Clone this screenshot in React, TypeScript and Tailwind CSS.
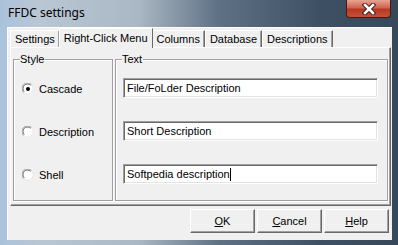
import React from 'react';

const ui = { fontFamily: '"Liberation Sans", Arial, sans-serif' };

const tabs = ['Settings', 'Right-Click Menu', 'Columns', 'Database', 'Descriptions'];

function Radio({ checked }: { checked?: boolean }) {
  return (
    <svg width="12" height="12" viewBox="0 0 12 12">
      <circle cx="6" cy="6" r="5.5" fill="#fff" />
      <path d="M1.5 9.5 A5.5 5.5 0 0 1 9.5 1.5" fill="none" stroke="#a0a0a0" strokeWidth="1" />
      <path d="M2.3 8.7 A4.5 4.5 0 0 1 8.7 2.3" fill="none" stroke="#696969" strokeWidth="1" />
      <path d="M2.3 10 A5.5 5.5 0 0 0 10 2.3" fill="none" stroke="#e3e3e3" strokeWidth="1" />
      {checked && <circle cx="6" cy="6" r="2" fill="#000" />}
    </svg>
  );
}

function TextBox({ value, caret }: { value: string; caret?: boolean }) {
  return (
    <div className="h-[20px] bg-white border border-t-[#a0a0a0] border-l-[#a0a0a0] border-b-white border-r-white shadow-[inset_1px_1px_0_#696969,inset_-1px_-1px_0_#e3e3e3] flex items-center pl-[3px] text-[11px] text-black">
      <span>{value}</span>
      {caret && <span className="w-px h-[13px] bg-black" />}
    </div>
  );
}

function Button({ hot, rest }: { hot: string; rest: string }) {
  return (
    <div className="w-[65px] h-[24px] bg-[#f0f0f0] border border-t-white border-l-white border-b-[#696969] border-r-[#696969] shadow-[inset_-1px_-1px_0_#a0a0a0] flex items-center justify-center text-[11px] text-black">
      <span>
        <span className="underline">{hot}</span>
        {rest}
      </span>
    </div>
  );
}

function Group({ label, className, children }: { label: string; className: string; children: React.ReactNode }) {
  return (
    <div className={`relative border border-[#a0a0a0] shadow-[inset_1px_1px_0_#fff,1px_1px_0_#fff] ${className}`}>
      <span className="absolute -top-[7px] left-[6px] bg-[#f0f0f0] pr-px text-[11px] leading-[13px] text-black">{label}</span>
      {children}
    </div>
  );
}

export default function App() {
  return (
    <div
      className="w-[398px] h-[245px] overflow-hidden flex flex-col bg-[linear-gradient(90deg,#a9c3dc_0%,#b9c6d3_10%,#aab7c4_35%,#5f7184_55%,#3e5063_80%,#36485a_100%)]"
      style={ui}
    >
      {/* Title bar */}
      <div className="h-[27px] flex items-start justify-between pl-[8px] pr-[7px] shrink-0">
        <span className="mt-[4px] text-[12px] text-black" style={{ fontFamily: '"Noto Sans", "Open Sans", sans-serif' }}>
          FFDC settings
        </span>
        <div className="w-[45px] h-[18px] rounded-b-[4px] border border-t-0 border-[#4a1a12] bg-[linear-gradient(180deg,#e8a394_0%,#d1644f_45%,#b53a22_55%,#c8503a_100%)] flex items-center justify-center">
          <svg width="14" height="12" viewBox="0 0 14 12">
            <path d="M3 2 L11 10 M11 2 L3 10" stroke="#3a2020" strokeWidth="4.5" strokeLinecap="square" />
            <path d="M3 2 L11 10 M11 2 L3 10" stroke="#fff" strokeWidth="2.5" strokeLinecap="square" />
          </svg>
        </div>
      </div>

      {/* Client area */}
      <div className="ml-[7px] mr-[6px] mb-[5px] flex-1 bg-[#f0f0f0] border-l border-t border-white flex flex-col pl-[2px] pr-[1px]">
        {/* Tabs */}
        <div className="h-[19px] flex items-end text-[11px] text-black">
          {tabs.map((t, i) =>
            i === 1 ? (
              <div key={t} className="h-[20px] -mx-[1px] px-[4px] bg-[#f0f0f0] border-l border-t border-white border-r border-r-[#696969] relative z-10 -mb-px flex items-center">
                {t}
              </div>
            ) : (
              <div key={t} className="h-[17px] px-[4px] border-l border-t border-white border-r border-r-[#696969] shadow-[inset_-1px_0_0_#a0a0a0] flex items-center">
                {t}
              </div>
            )
          )}
        </div>

        {/* Panel */}
        <div className="h-[159px] border border-t-white border-l-white border-b-[#696969] border-r-[#696969] shadow-[inset_-1px_-1px_0_#a0a0a0] flex gap-[2px] pt-[11px] pl-[2px] pr-[2px] pb-[4px]">
          <Group label="Style" className="w-[100px] h-[142px] flex flex-col gap-[23px] pt-[19px] pl-[8px]">
            {[['Cascade', true], ['Description', false], ['Shell', false]].map(([l, c]) => (
              <div key={l as string} className="h-[20px] flex items-center gap-[5px] text-[11px] text-black">
                <Radio checked={c as boolean} />
                <span>{l as string}</span>
              </div>
            ))}
          </Group>
          <Group label="Text" className="flex-1 h-[142px] flex flex-col gap-[23px] pt-[18px] pl-[7px] pr-[9px]">
            <TextBox value="File/FoLder Description" />
            <TextBox value="Short Description" />
            <TextBox value="Softpedia description" caret />
          </Group>
        </div>

        {/* Buttons */}
        <div className="flex justify-end gap-[2px] pt-[3px] pr-[2px]">
          <Button hot="O" rest="K" />
          <Button hot="C" rest="ancel" />
          <Button hot="H" rest="elp" />
        </div>
      </div>
    </div>
  );
}
